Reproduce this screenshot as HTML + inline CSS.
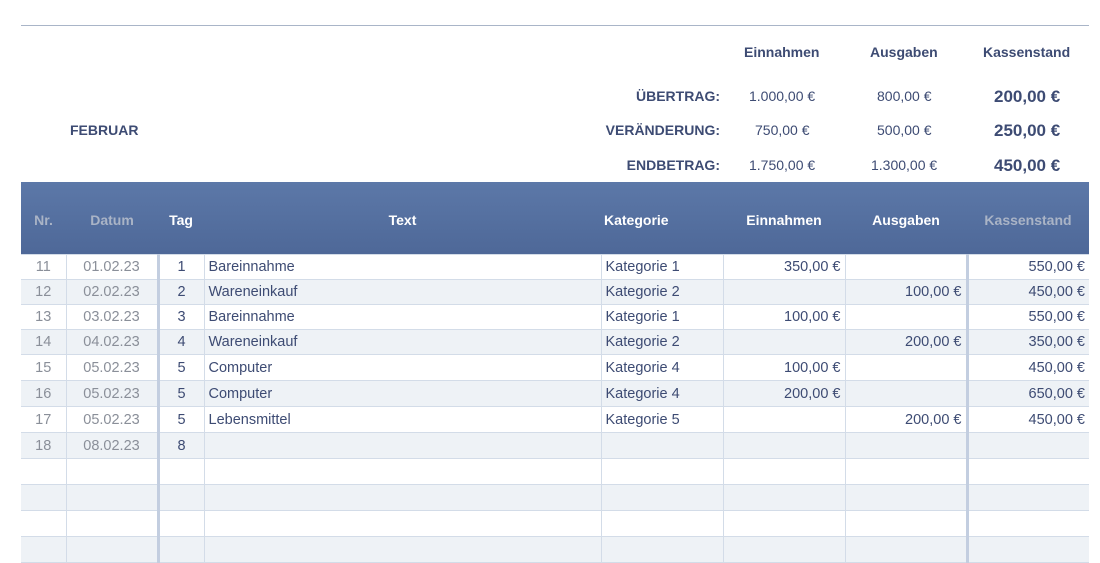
<!DOCTYPE html>
<html><head><meta charset="utf-8"><style>
*{margin:0;padding:0;box-sizing:border-box}
body{width:1100px;height:552px;overflow:hidden;background:#fff;font-family:"Liberation Sans",Arial,sans-serif;color:#3d4b73;position:relative}
.a{position:absolute;white-space:nowrap}
.b{font-weight:bold}
table{position:absolute;left:21px;top:254px;border-collapse:collapse;table-layout:fixed;font-size:14.5px}
td{border:1px solid #d3dce8;padding:0 4px;height:25px;line-height:22px;white-space:nowrap;overflow:hidden}
tr:nth-child(even) td{background:#eef2f6}
td.g{color:#8a8f99;text-align:center}
td.c{text-align:center}
td.r{text-align:right}
td.tk{border-right:3px solid #c3cee0}
tr td:first-child{border-left:none}
tr td:last-child{border-right:none}
</style></head><body>
<div class="a" style="left:21px;top:25px;width:1068px;height:1px;background:#a9b5c8"></div>
<div class="a b" style="left:744px;top:44px;font-size:14px">Einnahmen</div>
<div class="a b" style="left:870px;top:44px;font-size:14px">Ausgaben</div>
<div class="a b" style="left:983px;top:44px;font-size:14px">Kassenstand</div>
<div class="a b" style="left:70px;top:122px;font-size:14px">FEBRUAR</div>
<div class="a b" style="right:380px;top:88px;font-size:14px">ÜBERTRAG:</div>
<div class="a b" style="right:380px;top:122px;font-size:14px">VERÄNDERUNG:</div>
<div class="a b" style="right:380px;top:157px;font-size:14px">ENDBETRAG:</div>
<div class="a" style="left:749px;top:88px;font-size:14px">1.000,00 €</div>
<div class="a" style="left:755px;top:122px;font-size:14px">750,00 €</div>
<div class="a" style="left:749px;top:157px;font-size:14px">1.750,00 €</div>
<div class="a" style="left:877px;top:88px;font-size:14px">800,00 €</div>
<div class="a" style="left:877px;top:122px;font-size:14px">500,00 €</div>
<div class="a" style="left:871px;top:157px;font-size:14px">1.300,00 €</div>
<div class="a b" style="left:994px;top:87px;font-size:17px">200,00 €</div>
<div class="a b" style="left:994px;top:121px;font-size:17px">250,00 €</div>
<div class="a b" style="left:994px;top:156px;font-size:17px">450,00 €</div>
<div class="a" style="left:21px;top:182px;width:1068px;height:72px;background:linear-gradient(#5c78a8,#4e6898)"></div>
<div class="a b" style="left:21px;width:45px;text-align:center;top:212px;font-size:14px;color:#aab4c6">Nr.</div>
<div class="a b" style="left:66px;width:92px;text-align:center;top:212px;font-size:14px;color:#aab4c6">Datum</div>
<div class="a b" style="left:158px;width:46px;text-align:center;top:212px;font-size:14px;color:#fff">Tag</div>
<div class="a b" style="left:204px;width:397px;text-align:center;top:212px;font-size:14px;color:#fff">Text</div>
<div class="a b" style="left:604px;top:212px;font-size:14px;color:#fff">Kategorie</div>
<div class="a b" style="left:723px;width:122px;text-align:center;top:212px;font-size:14px;color:#fff">Einnahmen</div>
<div class="a b" style="left:845px;width:122px;text-align:center;top:212px;font-size:14px;color:#fff">Ausgaben</div>
<div class="a b" style="left:967px;width:122px;text-align:center;top:212px;font-size:14px;color:#aab4c6">Kassenstand</div>
<table>
<colgroup><col style="width:45px"><col style="width:92px"><col style="width:46px"><col style="width:397px"><col style="width:122px"><col style="width:122px"><col style="width:122px"><col style="width:122px"></colgroup>
<tr style="height:25px"><td class="g">11</td><td class="g tk">01.02.23</td><td class="c">1</td><td>Bareinnahme</td><td>Kategorie 1</td><td class="r">350,00 €</td><td class="r tk"></td><td class="r">550,00 €</td></tr>
<tr style="height:24px"><td class="g">12</td><td class="g tk">02.02.23</td><td class="c">2</td><td>Wareneinkauf</td><td>Kategorie 2</td><td class="r"></td><td class="r tk">100,00 €</td><td class="r">450,00 €</td></tr>
<tr style="height:24px"><td class="g">13</td><td class="g tk">03.02.23</td><td class="c">3</td><td>Bareinnahme</td><td>Kategorie 1</td><td class="r">100,00 €</td><td class="r tk"></td><td class="r">550,00 €</td></tr>
<tr style="height:25px"><td class="g">14</td><td class="g tk">04.02.23</td><td class="c">4</td><td>Wareneinkauf</td><td>Kategorie 2</td><td class="r"></td><td class="r tk">200,00 €</td><td class="r">350,00 €</td></tr>
<tr style="height:26px"><td class="g">15</td><td class="g tk">05.02.23</td><td class="c">5</td><td>Computer</td><td>Kategorie 4</td><td class="r">100,00 €</td><td class="r tk"></td><td class="r">450,00 €</td></tr>
<tr style="height:26px"><td class="g">16</td><td class="g tk">05.02.23</td><td class="c">5</td><td>Computer</td><td>Kategorie 4</td><td class="r">200,00 €</td><td class="r tk"></td><td class="r">650,00 €</td></tr>
<tr style="height:26px"><td class="g">17</td><td class="g tk">05.02.23</td><td class="c">5</td><td>Lebensmittel</td><td>Kategorie 5</td><td class="r"></td><td class="r tk">200,00 €</td><td class="r">450,00 €</td></tr>
<tr style="height:26px"><td class="g">18</td><td class="g tk">08.02.23</td><td class="c">8</td><td></td><td></td><td></td><td class="tk"></td><td></td></tr>
<tr style="height:26px"><td></td><td class="tk"></td><td></td><td></td><td></td><td></td><td class="tk"></td><td></td></tr>
<tr style="height:26px"><td></td><td class="tk"></td><td></td><td></td><td></td><td></td><td class="tk"></td><td></td></tr>
<tr style="height:26px"><td></td><td class="tk"></td><td></td><td></td><td></td><td></td><td class="tk"></td><td></td></tr>
<tr style="height:26px"><td></td><td class="tk"></td><td></td><td></td><td></td><td></td><td class="tk"></td><td></td></tr>
</table>
</body></html>
